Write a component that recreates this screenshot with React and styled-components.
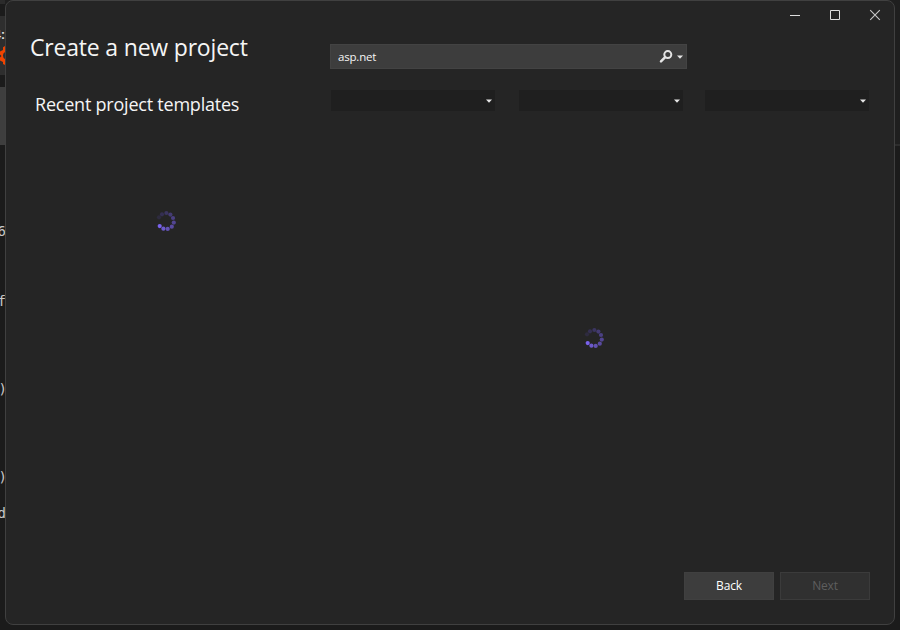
import React from "react";
import styled, { createGlobalStyle } from "styled-components";

const GlobalStyle = createGlobalStyle`
  * { box-sizing: border-box; }
  body { margin: 0; background: #1b1b1b; overflow: hidden; }
  button { font: inherit; }
`;

const Desktop = styled.div`
  display: grid;
  grid-template-columns: 5px 890px 5px;
  width: 900px;
  height: 630px;
  background: linear-gradient(#1f1f1f 0 144px, #2d2d2d 144px 146px, #1b1b1b 146px);
  font-family: "Open Sans", "Noto Sans", sans-serif;
`;

const EditorEdge = styled.div`
  display: flex;
  flex-direction: column;
  overflow: hidden;
  background: #1b1b1b;
`;

const Band = styled.div`
  flex: none;
  height: ${(p) => p.$h}px;
  background: ${(p) => p.$tone || "transparent"};
  overflow: hidden;
`;

const CodeLine = styled.div`
  display: flex;
  flex: none;
  justify-content: flex-end;
  height: 18px;
  margin-top: ${(p) => p.$gap}px;
  margin-right: ${(p) => -(p.$shift || 1)}px;
  color: #c8c8c8;
  font: 14px/18px "DejaVu Sans Mono", monospace;
`;

const TabMark = styled.div`
  display: flex;
  justify-content: flex-end;
  height: 28px;
  padding-top: 12px;
  color: #e4e4e4;
  font: bold 12px/14px "Liberation Sans", sans-serif;
`;

const Dialog = styled.main`
  display: flex;
  flex-direction: column;
  height: 625px;
  padding: 0 24px 24px;
  background: #252525;
  border: 1px solid #404040;
  border-radius: 8px;
  color: #f5f5f5;
`;

const TitleBar = styled.header`
  display: flex;
  justify-content: flex-end;
  gap: 24px;
  height: 29px;
  padding-top: 6px;
  margin-right: -13px;
`;

const WindowButton = styled.button`
  display: flex;
  align-items: center;
  justify-content: center;
  width: 16px;
  height: 16px;
  padding: 0;
  background: none;
  border: 0;
`;

const Content = styled.div`
  display: grid;
  grid-template-columns: 300px 1fr;
  flex: 1;
`;

const Recent = styled.section`
  display: flex;
  flex-direction: column;
`;

const Title = styled.h1`
  margin: 0;
  font-size: 23px;
  line-height: 34px;
  font-weight: 400;
  letter-spacing: -0.19px;
  white-space: nowrap;
`;

const Subtitle = styled.h2`
  margin: 26px 0 0 5px;
  font-size: 18px;
  line-height: 28px;
  font-weight: 400;
  letter-spacing: -0.22px;
  white-space: nowrap;
`;

const Templates = styled.section`
  display: flex;
  flex-direction: column;
  padding-top: 14px;
`;

const SearchBox = styled.div`
  display: flex;
  align-items: center;
  width: 357px;
  height: 25px;
  padding: 0 3px 0 8px;
  background: #3d3d3d;
  border: 1px solid #434343;
  font-size: 11.5px;
`;

const Query = styled.span`
  flex: 1;
  margin-left: -1px;
  letter-spacing: -0.2px;
`;

const Filters = styled.div`
  display: flex;
  margin-top: 21px;
`;

const Select = styled.div`
  display: flex;
  align-items: center;
  justify-content: flex-end;
  width: ${(p) => p.$w}px;
  height: 21px;
  margin-left: ${(p) => p.$gap}px;
  padding: 1px 3px 0 0;
  background: #1f1f1f;
`;

const Loading = styled.div`
  padding: ${(p) => p.$top}px 0 0 ${(p) => p.$left}px;
  line-height: 0;
`;

const Footer = styled.footer`
  display: flex;
  justify-content: flex-end;
  gap: 6px;
`;

const ActionButton = styled.button`
  width: 90px;
  height: 28px;
  padding: 0 0 1px;
  background: ${(p) => (p.disabled ? "#303030" : "#3d3d3d")};
  border: 1px solid ${(p) => (p.disabled ? "#3b3b3b" : "#404040")};
  color: ${(p) => (p.disabled ? "#5e5e5e" : "#ffffff")};
  font-size: 12px;
  letter-spacing: -0.15px;
`;

const Caret = () => (
  <svg width="6" height="4" viewBox="0 0 6 4">
    <path d="M0 .5h6L3 3.8z" fill="#e6e6e6" />
  </svg>
);

const DOTS = [
  [9, 17.3], [12, 14.3], [16.4, 13], [20.4, 14.6], [23, 18],
  [23.8, 22.6], [21.8, 26.7], [17.7, 28.9], [13.4, 28.7], [9.7, 26.1],
];
const DOT_COLORS = [
  "#2e2b3f", "#342f52", "#3b3560", "#443b72", "#4b4083",
  "#524592", "#594aa0", "#6252b2", "#6c59cb", "#7962ec",
];

const Spinner = () => (
  <svg width="22" height="22" viewBox="5 10 22 22">
    {DOTS.map(([x, y], i) => (
      <circle key={i} cx={x} cy={y} r="2.1" fill={DOT_COLORS[i]} />
    ))}
  </svg>
);

export default function App() {
  return (
    <>
      <GlobalStyle />
      <Desktop>
        <EditorEdge>
          <Band $h={4} $tone="#2b2b2b" />
          <Band $h={12} />
          <Band $h={59} $tone="#2e2e2e">
            <TabMark>4:</TabMark>
            <svg width="5" height="22" viewBox="0 0 5 22">
              <path d="M5 2L3 3.2V6L0 7.5V10.5L1.5 12L0 13.5V16.5L3 18V20L5 21V15A4 4 0 0 1 5 8Z" fill="#f04400" />
            </svg>
          </Band>
          <Band $h={12} />
          <Band $h={58} $tone="#3e3e3e" />
          <CodeLine $gap={77}>6</CodeLine>
          <CodeLine $gap={52}>f</CodeLine>
          <CodeLine $gap={70} $shift={2}>)</CodeLine>
          <CodeLine $gap={70} $shift={2}>)</CodeLine>
          <CodeLine $gap={18}>d</CodeLine>
        </EditorEdge>
        <Dialog>
          <TitleBar>
            <WindowButton aria-label="Minimize">
              <svg width="16" height="16"><path d="M3 8.5h10" stroke="#dedede" /></svg>
            </WindowButton>
            <WindowButton aria-label="Maximize">
              <svg width="16" height="16"><path d="M3.5 3.5h9v9h-9z" fill="none" stroke="#dedede" /></svg>
            </WindowButton>
            <WindowButton aria-label="Close">
              <svg width="16" height="16"><path d="M3.2 3.2l9.6 9.6M12.8 3.2l-9.6 9.6" stroke="#c8c8c8" strokeWidth="1.1" /></svg>
            </WindowButton>
          </TitleBar>
          <Content>
            <Recent>
              <Title>Create a new project</Title>
              <Subtitle>Recent project templates</Subtitle>
              <Loading $top={92} $left={125}><Spinner /></Loading>
            </Recent>
            <Templates>
              <SearchBox>
                <Query>asp.net</Query>
                <svg width="15" height="15" viewBox="0 0 15 15" fill="none" stroke="#e4e4e4">
                  <circle cx="8.8" cy="5.6" r="3.5" strokeWidth="2" />
                  <path d="M6.2 8.2L2 12.4" strokeWidth="2.5" strokeLinecap="round" />
                </svg>
                <svg width="9" height="4" viewBox="0 0 9 4"><path d="M3 .5h6L6 3.8z" fill="#e6e6e6" /></svg>
              </SearchBox>
              <Filters>
                <Select $w={164} $gap={1}><Caret /></Select>
                <Select $w={164} $gap={24}><Caret /></Select>
                <Select $w={164} $gap={22}><Caret /></Select>
              </Filters>
              <Loading $top={216} $left={253}><Spinner /></Loading>
            </Templates>
          </Content>
          <Footer>
            <ActionButton>Back</ActionButton>
            <ActionButton disabled>Next</ActionButton>
          </Footer>
        </Dialog>
      </Desktop>
    </>
  );
}
